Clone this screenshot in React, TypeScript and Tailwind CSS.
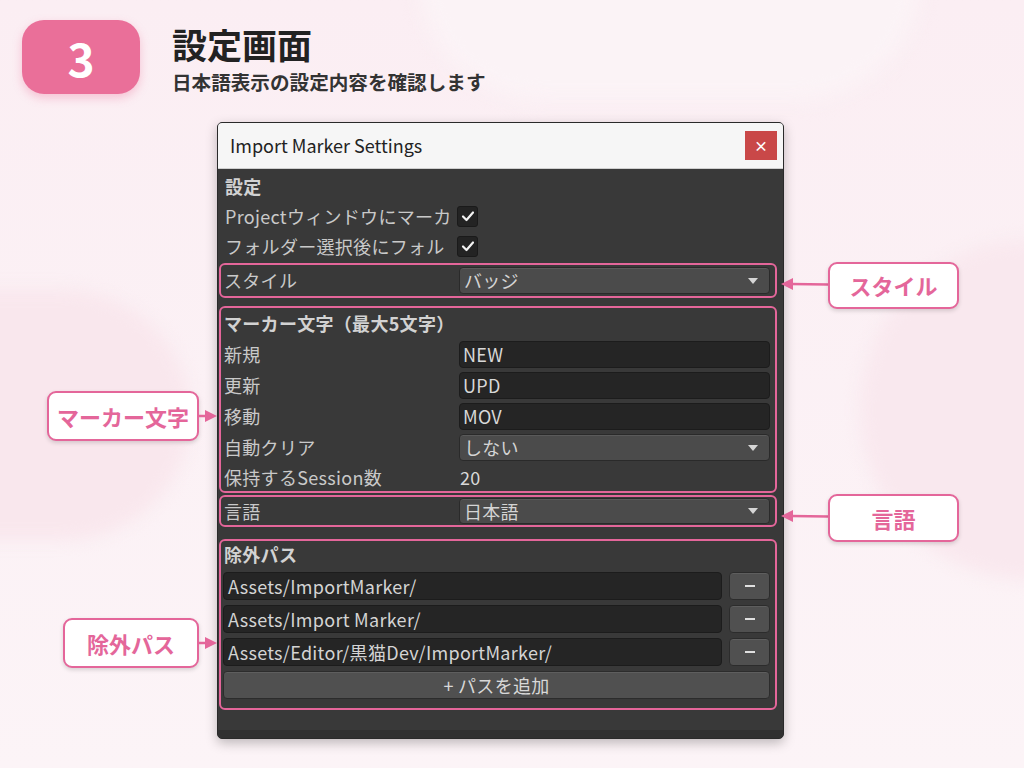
import React from "react";

const PINK = "#e4669a";

function Triangle() {
  return (
    <svg width="12" height="8" viewBox="0 0 12 8" className="shrink-0">
      <path d="M1 1 L11 1 L6 7 Z" fill="#d6d6d6" />
    </svg>
  );
}

function Check() {
  return (
    <div className="w-[21px] h-[21px] rounded-[3px] bg-[#232323] border border-[#1a1a1a] flex items-center justify-center">
      <svg width="14" height="12" viewBox="0 0 14 12">
        <path d="M2 6.5 L5.5 10 L12 2.5" stroke="#f2f2f2" strokeWidth="2.2" fill="none" strokeLinecap="round" strokeLinejoin="round" />
      </svg>
    </div>
  );
}

function Dropdown({ value }: { value: string }) {
  return (
    <div className="flex-1 h-full rounded-[4px] bg-[#4b4b4b] border border-[#2a2a2a] shadow-[inset_0_1px_0_#5a5a5a] flex items-center justify-between pl-[4px] pr-[10px] text-[#d4d4d4]">
      <span>{value}</span>
      <Triangle />
    </div>
  );
}

function TextInput({ value }: { value: string }) {
  return (
    <div className="flex-1 h-[27px] rounded-[4px] bg-[#252525] border border-[#1c1c1c] flex items-center pl-[3px] text-[#d8d8d8]">
      {value}
    </div>
  );
}

function Callout({ label, className, side }: { label: string; className: string; side: "left" | "right" }) {
  const box = (
    <div
      className="h-full flex-1 rounded-[9px] bg-white border-2 flex items-center justify-center text-[22px] font-bold shadow-[0_2px_4px_rgba(0,0,0,0.15)]"
      style={{ borderColor: PINK, color: PINK }}
    >
      {label}
    </div>
  );
  return (
    <div className={`absolute flex items-center ${className}`}>
      {side === "right" ? (
        <>
          <svg width="47" height="14" viewBox="0 0 47 14" className="shrink-0 -mt-[4px]">
            <path d="M0 7 L12 1 L12 13 Z" fill={PINK} />
            <line x1="10" y1="7" x2="47" y2="7.6" stroke={PINK} strokeWidth="2.5" />
          </svg>
          {box}
        </>
      ) : (
        <>
          {box}
          <svg width="18" height="14" viewBox="0 0 18 14" className="shrink-0">
            <line x1="0" y1="7" x2="8" y2="7" stroke={PINK} strokeWidth="2.5" />
            <path d="M18 7 L6 1 L6 13 Z" fill={PINK} />
          </svg>
        </>
      )}
    </div>
  );
}

export default function App() {
  const paths = ["Assets/ImportMarker/", "Assets/Import Marker/", "Assets/Editor/黒猫Dev/ImportMarker/"];

  return (
    <div
      className="relative w-[1024px] h-[768px] overflow-hidden bg-gradient-to-b from-[#fbeef3] to-[#fcf4f7]"
      style={{ fontFamily: '"Noto Sans CJK JP", "Noto Sans", sans-serif' }}
    >
      {/* soft background blobs */}
      <div className="absolute -left-[150px] top-[290px] w-[340px] h-[250px] rounded-full bg-[#f9e7ed] blur-[8px]" />
      <div className="absolute left-[860px] top-[240px] w-[360px] h-[340px] rounded-full bg-[#f9e8ee] blur-[8px]" />
      <div className="absolute left-[420px] -top-[140px] w-[500px] h-[240px] rounded-full bg-[#fbf3f6] blur-[10px]" />

      <div className="relative">
        {/* header */}
        <div className="flex items-start pt-[20px] pl-[22px]">
          <div className="w-[118px] h-[74px] rounded-[22px] bg-[#ea6f99] shadow-[0_4px_10px_rgba(234,111,153,0.35)] flex items-center justify-center text-white text-[46px] font-bold leading-none">
            3
          </div>
          <div className="ml-[32px] flex flex-col">
            <div className="text-[35px] font-bold text-[#222] leading-[40px] mt-[4px]">設定画面</div>
            <div className="text-[19.6px] font-bold text-[#333] leading-[26px] mt-[5px]">日本語表示の設定内容を確認します</div>
          </div>
        </div>

        {/* window */}
        <div className="ml-[217px] mt-[27px] w-[567px] h-[617px] rounded-[5px] overflow-hidden bg-[#393939] shadow-[0_4px_12px_rgba(0,0,0,0.25)] border border-[#2a2a2a] flex flex-col text-[18px] tracking-[0.3px] text-[#c9c9c9]">
          <div className="h-[46px] shrink-0 bg-[#f6f6f6] flex items-center justify-between pl-[12px] pr-[6px] border-b border-[#cfcfcf] tracking-normal">
            <span className="text-[18px] text-[#222]">Import Marker Settings</span>
            <div className="w-[32px] h-[29px] bg-[#c94848] flex items-center justify-center text-white text-[14px] font-bold">×</div>
          </div>

          <div className="flex-1 flex flex-col pl-[1px] pr-[6px] pt-[2px]">
            <div className="h-[30px] flex items-center pl-[6px] font-bold text-[#d2d2d2]">設定</div>
            <div className="h-[30px] flex items-center pl-[6px]">
              <span className="w-[232px] overflow-hidden whitespace-nowrap">Projectウィンドウにマーカ</span>
              <Check />
            </div>
            <div className="h-[30px] flex items-center pl-[6px]">
              <span className="w-[232px] overflow-hidden whitespace-nowrap">フォルダー選択後にフォル</span>
              <Check />
            </div>

            {/* style */}
            <div className="mt-[2px] h-[35px] rounded-[6px] border-2 flex items-center pl-[3px] pr-[5px] py-[2px]" style={{ borderColor: PINK }}>
              <span className="w-[235px]">スタイル</span>
              <Dropdown value="バッジ" />
            </div>

            {/* marker text */}
            <div className="mt-[8px] h-[187px] rounded-[6px] border-2 flex flex-col pl-[3px] pr-[5px]" style={{ borderColor: PINK }}>
              <div className="h-[31px] flex items-center font-bold text-[#d2d2d2]">マーカー文字（最大5文字）</div>
              {[
                ["新規", "NEW"],
                ["更新", "UPD"],
                ["移動", "MOV"],
              ].map(([k, v]) => (
                <div key={k} className="h-[31px] flex items-center">
                  <span className="w-[235px]">{k}</span>
                  <TextInput value={v} />
                </div>
              ))}
              <div className="h-[31px] flex items-center py-[2px]">
                <span className="w-[235px]">自動クリア</span>
                <Dropdown value="しない" />
              </div>
              <div className="h-[28px] flex items-center">
                <span className="w-[236px]">保持するSession数</span>
                <span className="text-[#d8d8d8]">20</span>
              </div>
            </div>

            {/* language */}
            <div className="mt-[2px] h-[32px] rounded-[6px] border-2 flex items-center pl-[3px] pr-[5px] py-[1px]" style={{ borderColor: PINK }}>
              <span className="w-[235px]">言語</span>
              <Dropdown value="日本語" />
            </div>

            {/* excluded paths */}
            <div className="mt-[12px] h-[171px] rounded-[6px] border-2 flex flex-col pl-[2px] pr-[5px]" style={{ borderColor: PINK }}>
              <div className="h-[26px] flex items-center pl-[1px] font-bold text-[#d2d2d2]">除外パス</div>
              <div className="mt-[5px] flex flex-col gap-[5px]">
                {paths.map((p) => (
                  <div key={p} className="h-[28px] flex items-center gap-[7px]">
                    <div className="flex-1 h-full rounded-[4px] bg-[#252525] border border-[#1c1c1c] flex items-center pl-[4px] text-[#d4d4d4]">
                      {p}
                    </div>
                    <div className="w-[41px] h-full rounded-[4px] bg-[#505050] border border-[#2c2c2c] shadow-[inset_0_1px_0_#5e5e5e] flex items-center justify-center">
                      <div className="w-[10px] h-[2px] bg-[#e0e0e0]" />
                    </div>
                  </div>
                ))}
                <div className="h-[28px] rounded-[4px] bg-[#505050] border border-[#2c2c2c] shadow-[inset_0_1px_0_#5e5e5e] flex items-center justify-center text-[#d8d8d8]">
                  + パスを追加
                </div>
              </div>
            </div>

            <div className="flex-1" />
          </div>
          <div className="h-[8px] shrink-0 bg-[#303030]" />
        </div>
      </div>

      {/* callouts */}
      <Callout label="スタイル" side="right" className="left-[781px] top-[262px] w-[178px] h-[47px]" />
      <Callout label="言語" side="right" className="left-[781px] top-[494px] w-[178px] h-[48px]" />
      <Callout label="マーカー文字" side="left" className="left-[47px] top-[391px] w-[170px] h-[50px]" />
      <Callout label="除外パス" side="left" className="left-[63px] top-[618px] w-[154px] h-[50px]" />
    </div>
  );
}
